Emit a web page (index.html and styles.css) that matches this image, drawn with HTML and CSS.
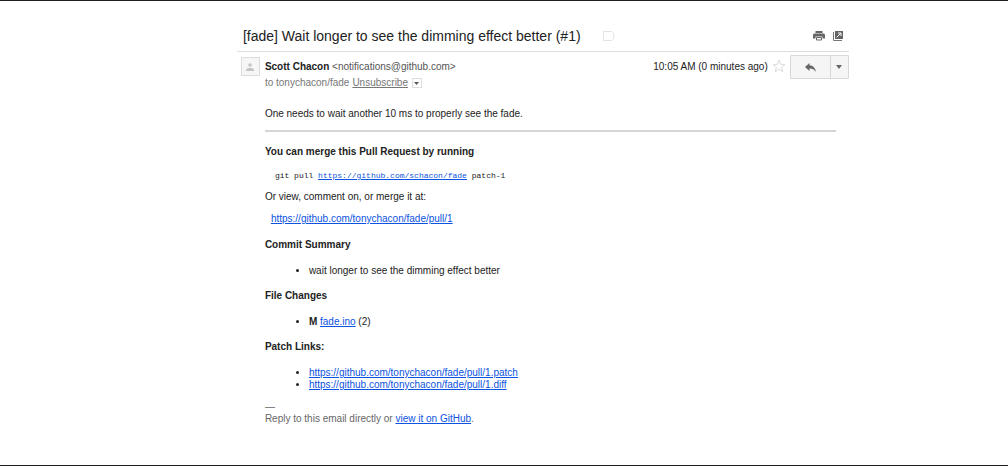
FILE: index.html
```
<!DOCTYPE html>
<html lang="en">
<head>
  <meta charset="UTF-8" />
  <meta name="viewport" content="width=device-width, initial-scale=1.0" />
  <title>[fade] Wait longer to see the dimming effect better (#1)</title>
  <link rel="stylesheet" href="styles.css">
</head>
<body>
  <main class="message">
    <header class="subject">
      <h1>[fade] Wait longer to see the dimming effect better (#1)</h1>
      <svg class="label-icon" width="12" height="10" viewBox="0 0 12 10" fill="none" stroke="#e4e4e4"><path d="M.5.5h8.5q2 1 2 4.500t-2 4.500h-8.500z"/></svg>
      <div class="tools">
        <button class="icon-button" aria-label="Print all">
          <svg width="12" height="10" viewBox="0 0 12 10" fill="#666"><path d="M2.500 0h7v2h-7zM1.500 2.500h9Q12 2.500 12 4v3.500H9.500V5.500h-7v2H0V4q0-1.500 1.500-1.500z"/><path d="M3.500 6.500h5V9h-5z" fill="#fff" stroke="#666"/></svg>
        </button>
        <button class="icon-button" aria-label="In new window">
          <svg width="10" height="10" viewBox="0 0 10 10"><path d="M.5 1v8.500H9" fill="none" stroke="#777"/><path d="M2 0h8v8H2z" fill="#666"/><path d="M3.500 6.500 7.500 2.500M5 2h3v3" fill="none" stroke="#fff"/></svg>
        </button>
      </div>
    </header>

    <section class="sender">
      <div class="avatar">
        <svg width="8" height="8" viewBox="0 0 8 8" fill="#c4c4c4"><circle cx="4" cy="2" r="1.800"/><path d="M0 8V6.500Q1 4.800 4 4.800t4 1.700V8z"/></svg>
      </div>
      <div class="names">
        <div><strong>Scott Chacon</strong> <span class="address">&lt;notifications@github.com&gt;</span></div>
        <div class="recipient">
          <span>to tonychacon/fade</span>
          <a href="#unsubscribe">Unsubscribe</a>
          <button class="details" aria-label="Show details"><svg width="5" height="3" viewBox="0 0 5 3" fill="#555"><path d="M0 0h5L2.500 3z"/></svg></button>
        </div>
      </div>
      <span class="time">10:05 AM (0 minutes ago)</span>
      <button class="icon-button star" aria-label="Star">
        <svg width="14" height="14" viewBox="0 0 14 14" fill="#fff" stroke="#dcdcdc"><path d="m7 1 1.600 4.300 4.400.2-3.400 2.800 1.200 4.400L7 10.200l-3.800 2.500 1.200-4.400L1 5.500l4.400-.2z"/></svg>
      </button>
      <div class="actions">
        <button class="reply" aria-label="Reply">
          <svg width="11" height="9" viewBox="0 0 11 9" fill="#666"><path d="M4.500 0v2.300Q10 2.800 11 9 8.500 5.500 4.500 5.600V8L0 4z"/></svg>
        </button>
        <button class="more" aria-label="More">
          <svg width="6" height="4" viewBox="0 0 6 4" fill="#666"><path d="M0 0h6L3 4z"/></svg>
        </button>
      </div>
    </section>

    <article class="content">
      <p>One needs to wait another 10 ms to properly see the fade.</p>
      <hr>
      <h2>You can merge this Pull Request by running</h2>
      <pre>git pull <a href="https://github.com/schacon/fade">https://github.com/schacon/fade</a> patch-1</pre>
      <p>Or view, comment on, or merge it at:</p>
      <p class="pull-link"><a href="https://github.com/tonychacon/fade/pull/1">https://github.com/tonychacon/fade/pull/1</a></p>
      <h2>Commit Summary</h2>
      <ul>
        <li>wait longer to see the dimming effect better</li>
      </ul>
      <h2>File Changes</h2>
      <ul>
        <li><strong>M</strong> <a href="#fade-ino">fade.ino</a> (2)</li>
      </ul>
      <h2>Patch Links:</h2>
      <ul class="patches">
        <li><a href="https://github.com/tonychacon/fade/pull/1.patch">https://github.com/tonychacon/fade/pull/1.patch</a></li>
        <li><a href="https://github.com/tonychacon/fade/pull/1.diff">https://github.com/tonychacon/fade/pull/1.diff</a></li>
      </ul>
      <p class="signature">—<br>Reply to this email directly or <a href="https://github.com/tonychacon/fade/pull/1">view it on GitHub</a>.</p>
    </article>
  </main>
</body>
</html>
```
FILE: styles.css
```
* {
  box-sizing: border-box;
}
body {
  margin: 0;
  min-height: 100vh;
  border-top: 1px solid #231f20;
  border-bottom: 1px solid #231f20;
  background: #fff;
  color: #222;
  font-family: "Liberation Sans", Arial, sans-serif;
  font-size: 10px;
  line-height: 12px;
}
.message {
  padding: 20px 15.8% 24px 23.5%;
}
button {
  display: flex;
  align-items: center;
  justify-content: center;
  padding: 0;
  border: 0;
  background: none;
}
a {
  color: #0b53e0;
}
svg {
  display: block;
}
.subject {
  display: flex;
  align-items: center;
  height: 31px;
  padding: 0 6px;
  border-bottom: 1px solid #ddd;
}
.subject h1 {
  margin: 0;
  font-size: 14px;
  font-weight: normal;
  line-height: 18px;
}
.label-icon {
  margin-left: 22px;
}
.tools {
  display: flex;
  gap: 8px;
  margin-left: auto;
}
.sender {
  display: flex;
  align-items: flex-start;
  padding: 3px 0 0 4px;
}
.avatar {
  display: flex;
  align-items: center;
  justify-content: center;
  width: 19px;
  height: 19px;
  margin-top: 2px;
  border: 1px solid #ddd;
  background: #f6f6f6;
}
.names {
  flex: 1;
  padding: 6px 0 0 5px;
}
.address {
  color: #555;
}
.recipient {
  display: flex;
  align-items: center;
  gap: 3px;
  margin-top: 4px;
  color: #777;
}
.recipient a {
  color: #777;
}
.details {
  width: 10px;
  height: 10px;
  margin-left: 1px;
  border: 1px solid #ddd;
}
.time {
  padding-top: 6px;
}
.star {
  margin: 4px 4px 0;
}
.actions {
  display: flex;
  height: 24px;
  border: 1px solid #d8d8d8;
  border-radius: 1px;
  background: #f5f5f5;
}
.reply {
  width: 39px;
}
.more {
  width: 18px;
  border-left: 1px solid #d8d8d8;
}
.content {
  padding: 19px 13px 0 28px;
}
.content p,
.content h2 {
  margin: 0;
}
.content hr {
  margin: 10px 0 14px;
  border: 0;
  border-top: 2px solid #d4d6d5;
}
.content h2 {
  font-size: 10px;
  line-height: 12px;
}
.content pre {
  margin: 12px 0 9px 10px;
  font-family: "Liberation Mono", "Courier New", monospace;
  font-size: 8px;
  line-height: 12px;
}
.content .pull-link {
  margin: 10px 0 14px 6px;
}
.content ul {
  margin: 14px 0 13px;
  padding-left: 44px;
}
.content .patches {
  margin-bottom: 10px;
}
.content .signature {
  color: #666;
}
```
